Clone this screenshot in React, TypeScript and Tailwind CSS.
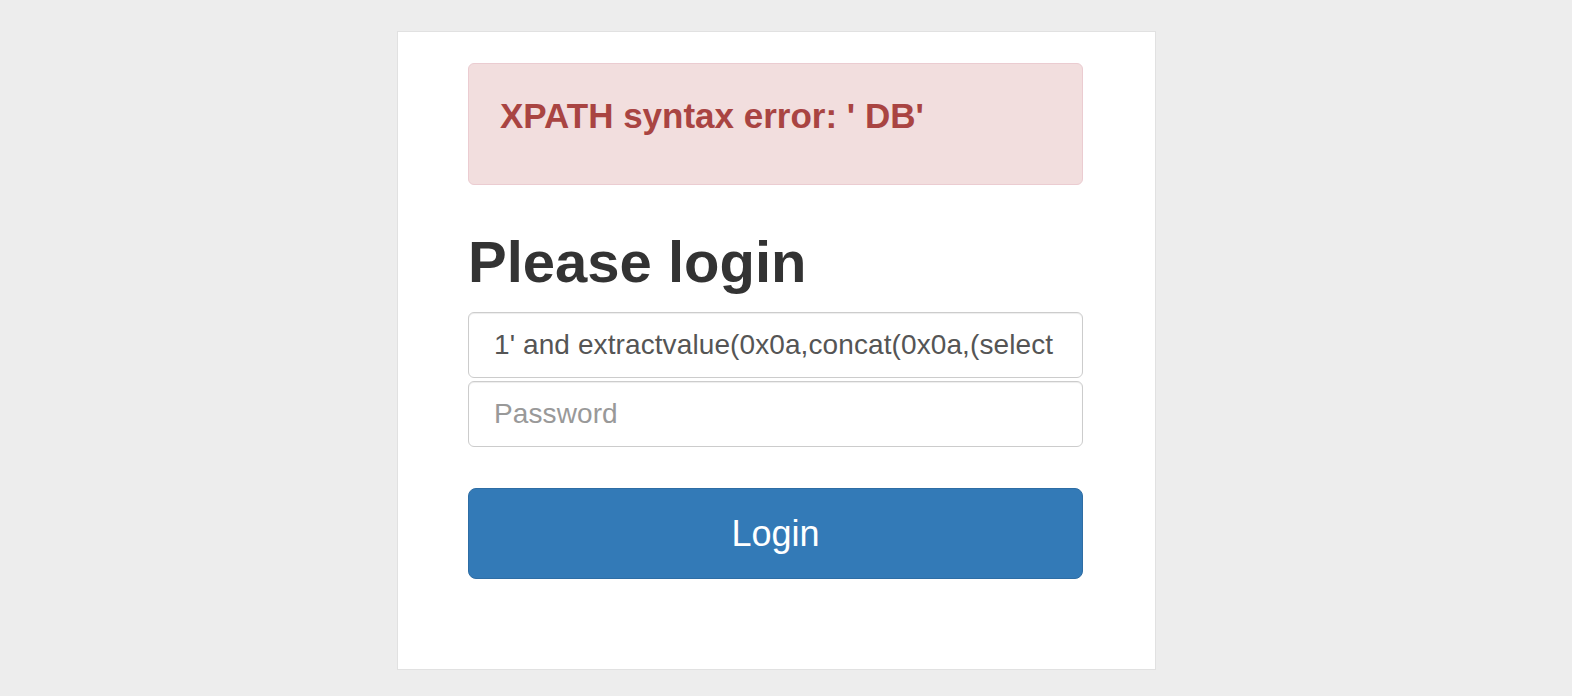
import { useState } from "react";

export default function App() {
  const [username, setUsername] = useState("1' and extractvalue(0x0a,concat(0x0a,(select");
  const [password, setPassword] = useState("");

  const field =
    "block box-border h-[66px] w-full rounded-[6px] border border-[#cccccc] bg-white px-[25px] text-[28px] tracking-[0.1px] text-[#555555] shadow-[inset_0_1px_1px_rgba(0,0,0,0.075)] outline-none placeholder:text-[#999999]";

  return (
    <div className="min-h-[696px] bg-[#ededed] font-['Liberation_Sans',Arial,sans-serif]">
      <div className="flex justify-center pt-[31px] pr-[19px]">
        <div className="box-border w-[759px] border border-[#e1e1e1] bg-white pl-[70px] pr-[72px] pt-[31px] pb-[90px]">
          <div className="box-border h-[122px] rounded-[6px] border border-[#ebccd1] bg-[#f2dede] pt-[32px] pl-[31px] text-[35px] leading-[40px] font-bold text-[#a94442]">
            XPATH syntax error: ' DB'
          </div>

          <h2 className="mt-[45px] mb-[18px] text-[58px] leading-[64px] font-bold text-[#333333]">
            Please login
          </h2>

          <input
            value={username}
            onChange={(e) => setUsername(e.target.value)}
            className={field}
          />
          <input
            type="password"
            value={password}
            onChange={(e) => setPassword(e.target.value)}
            placeholder="Password"
            className={`${field} mt-[3px]`}
          />

          <button className="mt-[41px] box-border flex h-[91px] w-full items-center justify-center rounded-[8px] border border-[#2e6da4] bg-[#337ab7] text-[36px] text-white">
            Login
          </button>
        </div>
      </div>
    </div>
  );
}
